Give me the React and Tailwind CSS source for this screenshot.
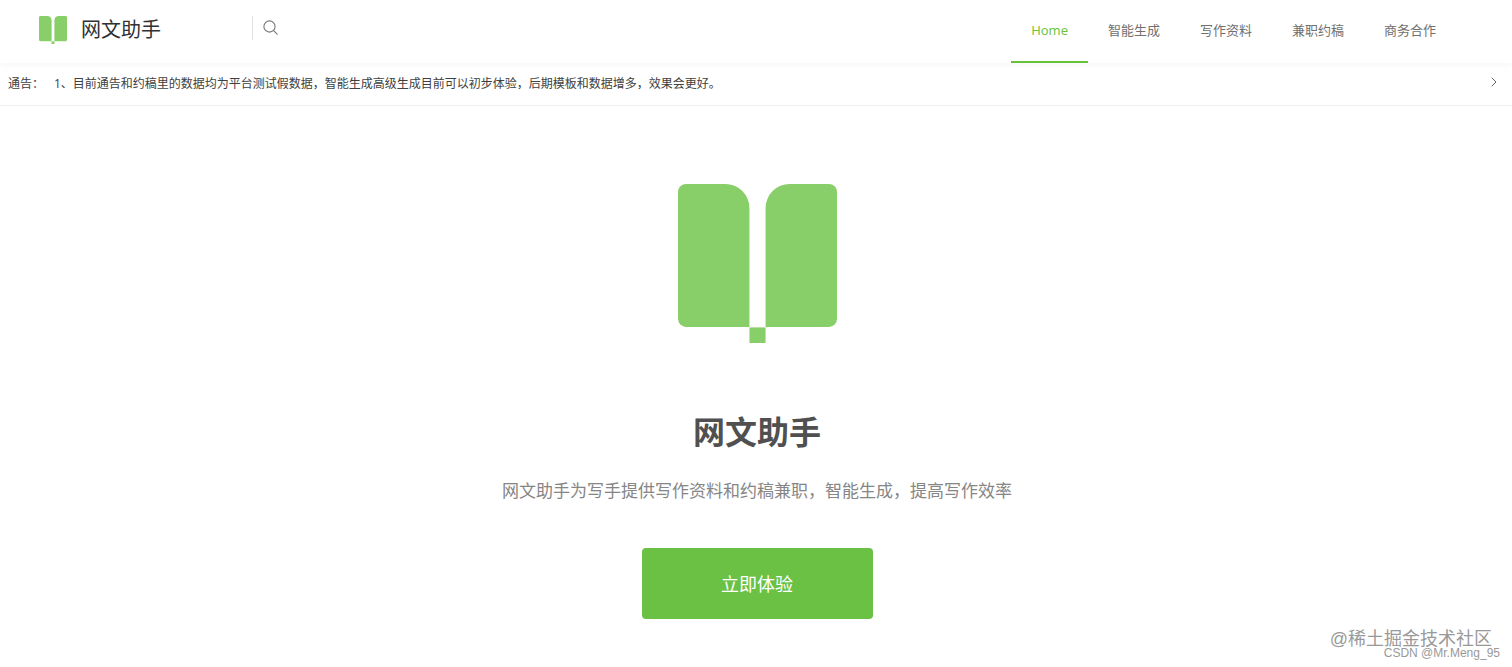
/**
 * Landing page: top bar with search and nav, notice strip, hero block.
 */
import { useState } from 'react'
import { ChevronRight } from 'lucide-react'

const NAV_ITEMS = ['Home', '智能生成', '写作资料', '兼职约稿', '商务合作']

function BookLogo({ className }) {
  return (
    <svg className={className} viewBox="0 0 158 158" fill="#88ce69" aria-hidden="true">
      <path d="M8 0H47A24 24 0 0 1 71 24V142H8A8 8 0 0 1 0 134V8A8 8 0 0 1 8 0Z" />
      <path d="M150 0H111A24 24 0 0 0 87 24V142H150A8 8 0 0 0 158 134V8A8 8 0 0 0 150 0Z" />
      <rect x="71" y="142.5" width="16" height="15.5" />
    </svg>
  )
}

function SearchIcon() {
  return (
    <svg className="w-4 h-4" viewBox="0 0 16 16" fill="none" stroke="#777777" strokeWidth="1.1" strokeLinecap="round">
      <circle cx="6.5" cy="6.5" r="5.6" />
      <path d="M10.6 10.6L14.2 14.2" />
    </svg>
  )
}

function Header() {
  const [active, setActive] = useState('Home')

  return (
    <header className="relative flex items-stretch justify-between h-[63px] pl-[39px] pr-14 bg-white shadow-[0_2px_6px_rgba(0,0,0,0.04)]">
      <div className="flex items-center pb-1">
        <a href="#home" className="flex items-center gap-3.5 text-xl text-[#303133]">
          <BookLogo className="w-7 h-7" />
          网文助手
        </a>
        <div className="flex items-center h-6 ml-[91px] pl-2.5 mb-1 border-l border-[#e4e4e4]">
          <button type="button" aria-label="搜索" className="block">
            <SearchIcon />
          </button>
        </div>
      </div>

      <nav className="flex items-stretch">
        {NAV_ITEMS.map((item) => (
          <a
            key={item}
            href="#home"
            onClick={() => setActive(item)}
            className={`flex items-center px-5 text-[13px] border-b-2 ${
              active === item ? 'text-[#67c23a] border-[#67c23a]' : 'text-[#707070] border-transparent'
            }`}
          >
            {item}
          </a>
        ))}
      </nav>
    </header>
  )
}

function Notice() {
  return (
    <section className="flex items-center h-[43px] pl-2 pr-2.5 text-xs text-[#404040] border-b border-[#eeeeee]">
      <span className="w-[46px] shrink-0">通告：</span>
      <p className="grow">
        1、目前通告和约稿里的数据均为平台测试假数据，智能生成高级生成目前可以初步体验，后期模板和数据增多，效果会更好。
      </p>
      <button type="button" aria-label="下一条" className="mb-1">
        <ChevronRight className="w-4 h-4 text-[#606266]" strokeWidth={1.5} />
      </button>
    </section>
  )
}

function Hero() {
  return (
    <main className="flex flex-col items-center pl-0.5 pt-[78px] pb-12">
      <BookLogo className="w-[159px] h-[159px]" />
      <h1 className="mt-[65px] text-[32px] leading-12 font-bold text-[#505050]">网文助手</h1>
      <p className="mt-[23px] text-[17px] leading-6 text-[#868686]">
        网文助手为写手提供写作资料和约稿兼职，智能生成，提高写作效率
      </p>
      <button type="button" className="mt-[45px] w-[231px] h-[71px] rounded bg-[#6ac144] text-lg text-white">
        立即体验
      </button>
    </main>
  )
}

export default function App() {
  return (
    <div className="relative min-h-screen bg-white font-['Open_Sans','Noto_Sans_CJK_SC',sans-serif]">
      <Header />
      <Notice />
      <Hero />
      <div className="absolute right-3 bottom-2 flex flex-col items-end text-[#999999] font-['Liberation_Sans','Noto_Sans_CJK_SC',sans-serif]">
        <span className="pr-2 text-lg leading-4">@稀土掘金技术社区</span>
        <span className="text-xs leading-3">CSDN @Mr.Meng_95</span>
      </div>
    </div>
  )
}
